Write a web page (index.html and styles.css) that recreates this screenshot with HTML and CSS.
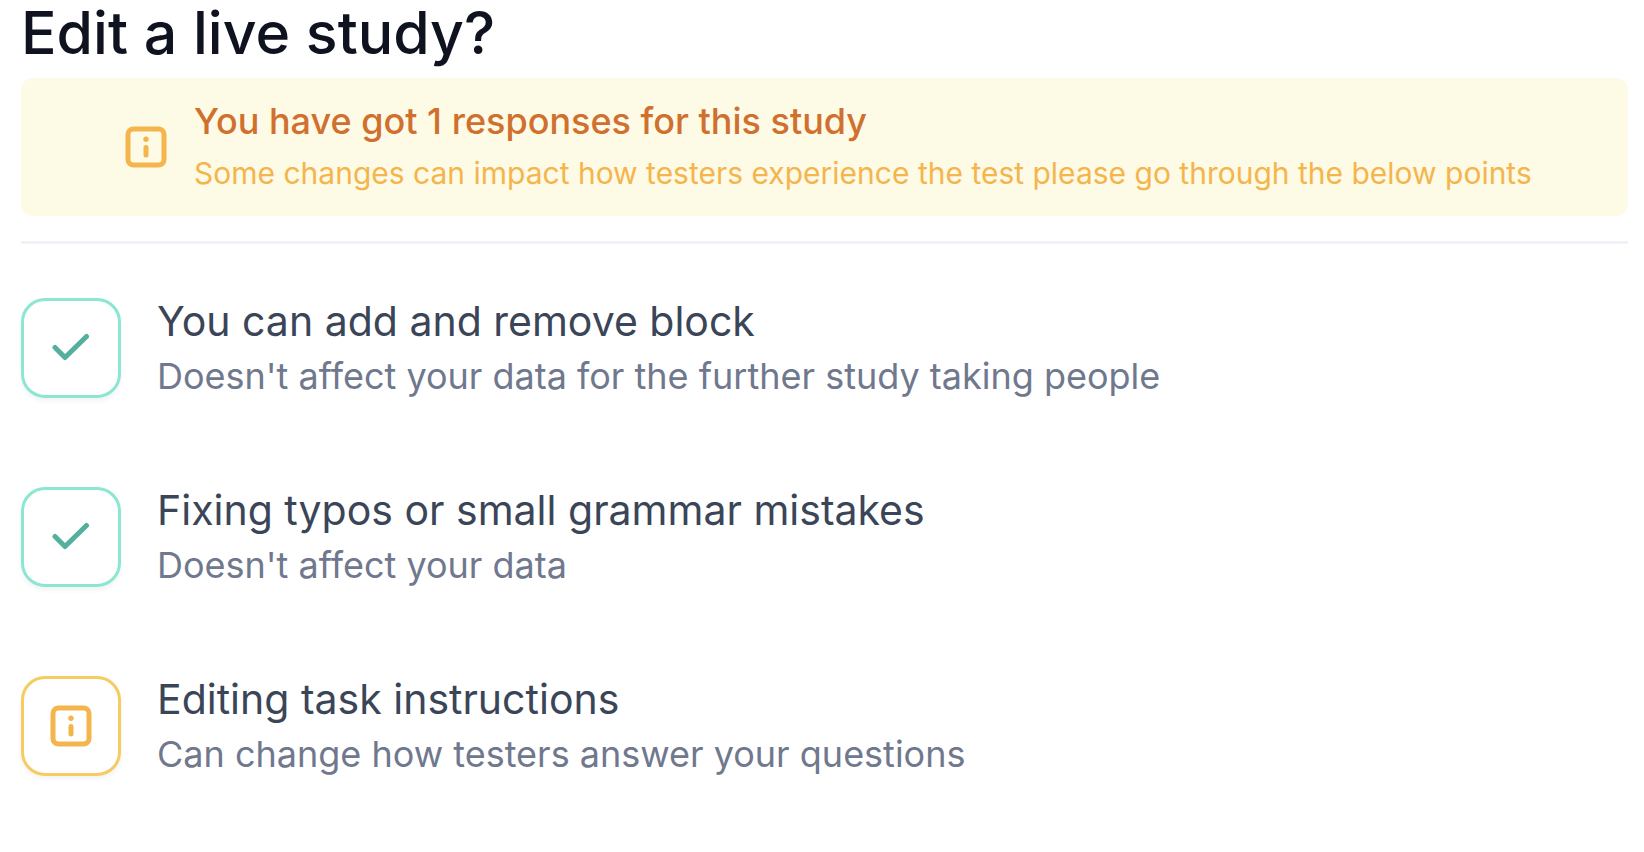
FILE: index.html
```html
<!DOCTYPE html>
<html lang="en">
<head>
<meta charset="utf-8">
<title>Edit a live study?</title>
<link rel="stylesheet" href="styles.css">
</head>
<body>
<main class="dialog">
  <h1 class="title">Edit a live study?</h1>
  <section class="notice">
    <svg class="info-icon" viewBox="0 0 42 42" aria-hidden="true"><rect x="3" y="3" width="36" height="36" rx="5.500"/><path d="M21 21.500v7.500"/><circle cx="21" cy="13.300" r="2.700"/></svg>
    <div class="notice-text">
      <h2 class="notice-title">You have got 1 responses for this study</h2>
      <p class="notice-body">Some changes can impact how testers experience the test please go through the below points</p>
    </div>
  </section>
  <ul class="points">
    <li class="point">
      <span class="badge badge-ok"><svg class="check-icon" viewBox="0 0 38 30" aria-hidden="true"><path d="M3 14.500l10 10L34.500 3.500"/></svg></span>
      <div>
        <h3 class="point-title">You can add and remove block</h3>
        <p class="point-body">Doesn't affect your data for the further study taking people</p>
      </div>
    </li>
    <li class="point">
      <span class="badge badge-ok"><svg class="check-icon" viewBox="0 0 38 30" aria-hidden="true"><path d="M3 14.500l10 10L34.500 3.500"/></svg></span>
      <div>
        <h3 class="point-title">Fixing typos or small grammar mistakes</h3>
        <p class="point-body">Doesn't affect your data</p>
      </div>
    </li>
    <li class="point">
      <span class="badge badge-warn"><svg class="info-icon" viewBox="0 0 42 42" aria-hidden="true"><rect x="3" y="3" width="36" height="36" rx="5.500"/><path d="M21 21.500v7.500"/><circle cx="21" cy="13.300" r="2.700"/></svg></span>
      <div>
        <h3 class="point-title">Editing task instructions</h3>
        <p class="point-body">Can change how testers answer your questions</p>
      </div>
    </li>
  </ul>
</main>
</body>
</html>
```

FILE: styles.css
```css
* { box-sizing: border-box; margin: 0; padding: 0; }
body { background: #fff; font-family: Inter, "Liberation Sans", sans-serif; }
.dialog { padding: 0 16px 0 21px; }
.title { color: #0e131f; font-size: 59px; font-weight: 500; line-height: 66px; padding-bottom: 12px; }
.notice { display: flex; align-items: center; gap: 27px; padding: 17px 104px; background: #fdfae6; border-radius: 12px; }
.notice-title { color: #d0702f; font-size: 36px; font-weight: 500; line-height: 52px; }
.notice-body { color: #f4b54c; font-size: 30px; line-height: 52px; }
.notice-text { flex: none; max-width: 100%; }
.info-icon { flex: none; width: 42px; height: 42px; fill: none; stroke: #f4b54c; stroke-width: 5; stroke-linecap: round; }
.info-icon circle { fill: #f4b54c; stroke: none; }
.points { list-style: none; margin-top: 25px; padding-top: 49px; border-top: 3px solid #f0f2f7; display: grid; gap: 79px; }
.point { display: flex; gap: 36px; align-items: center; }
.badge { flex: none; display: flex; align-items: center; justify-content: center; width: 100px; height: 100px; border: 3px solid; border-radius: 24px; box-shadow: 0 3px 5px #0000000d; }
.badge-ok { border-color: #8be6d2; }
.badge-warn { border-color: #f6cb62; }
.check-icon { width: 38px; height: 30px; fill: none; stroke: #54b09d; stroke-width: 5; stroke-linecap: round; stroke-linejoin: round; }
.point-title { color: #3b4558; font-size: 41px; font-weight: 400; line-height: 56px; }
.point-body { color: #70788d; font-size: 36px; line-height: 54px; }
```
